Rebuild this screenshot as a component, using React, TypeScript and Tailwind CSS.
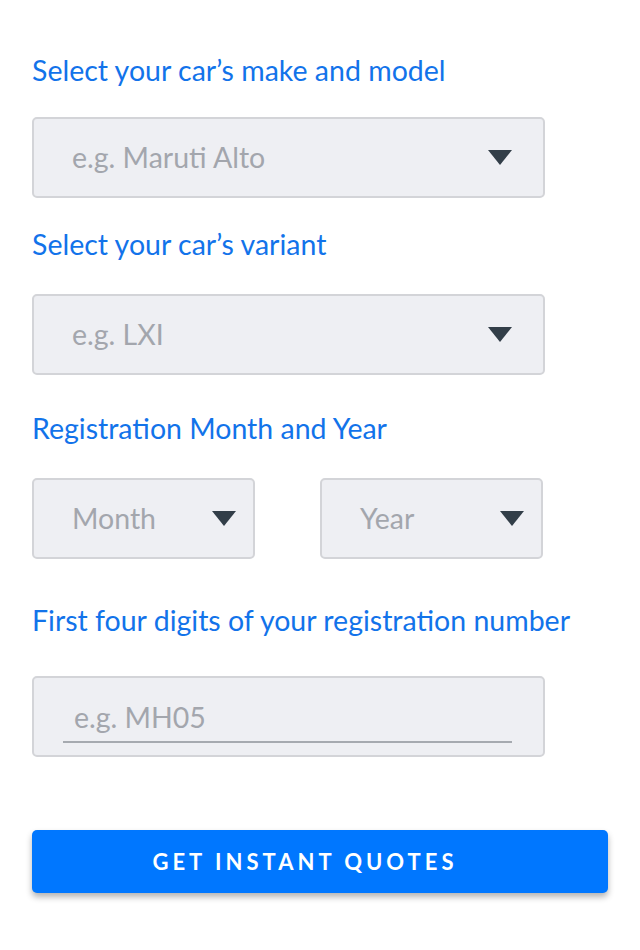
const font = { fontFamily: "Lato, 'Open Sans', sans-serif" }

function Caret() {
  return (
    <svg width="24" height="15" viewBox="0 0 24 15" className="shrink-0">
      <polygon points="0,0 24,0 12,15" fill="#323e48" />
    </svg>
  )
}

function Label({ text, className }: { text: string; className?: string }) {
  return (
    <div className={`h-10 leading-10 text-[28.5px] text-[#1273ea] whitespace-nowrap ${className ?? ""}`}>
      {text}
    </div>
  )
}

function SelectBox({ placeholder, className }: { placeholder: string; className?: string }) {
  return (
    <div
      className={`h-[81px] flex items-center justify-between rounded-[5px] border-2 border-[#d3d4d8] bg-[#eeeff3] pl-[38px] ${className ?? ""}`}
    >
      <span className="text-[28.5px] text-[#a3a6ad]">{placeholder}</span>
      <Caret />
    </div>
  )
}

export default function App() {
  return (
    <div className="w-[640px] h-[950px] bg-white px-8 pt-[50px]" style={font}>
      <Label text="Select your car’s make and model" />
      <SelectBox placeholder="e.g. Maruti Alto" className="mt-[27px] w-[513px] pr-[31px]" />

      <Label text="Select your car’s variant" className="mt-[26px]" />
      <SelectBox placeholder="e.g. LXI" className="mt-[30px] w-[513px] pr-[31px]" />

      <Label text="Registration Month and Year" className="mt-[33px]" />
      <div className="mt-[30px] flex gap-[65px]">
        <SelectBox placeholder="Month" className="w-[223px] pr-[17px]" />
        <SelectBox placeholder="Year" className="w-[223px] pr-[17px]" />
      </div>

      <Label text="First four digits of your registration number" className="mt-[41px]" />
      <div className="mt-9 h-[81px] w-[513px] rounded-[5px] border-2 border-[#d3d4d8] bg-[#eeeff3] pl-[29px] pr-[31px] pt-[17px]">
        <div className="h-[48px] border-b-2 border-[#a6aab0] pl-[11px] leading-[44px] text-[28.5px] text-[#a3a6ad]">
          e.g. MH05
        </div>
      </div>

      <button className="mt-[73px] h-[63px] w-[576px] rounded-[5px] bg-[#0077ff] pr-[30px] text-[22px] font-bold tracking-[4px] text-white shadow-[0_4px_6px_rgba(0,0,0,0.3)]">
        GET INSTANT QUOTES
      </button>
    </div>
  )
}
